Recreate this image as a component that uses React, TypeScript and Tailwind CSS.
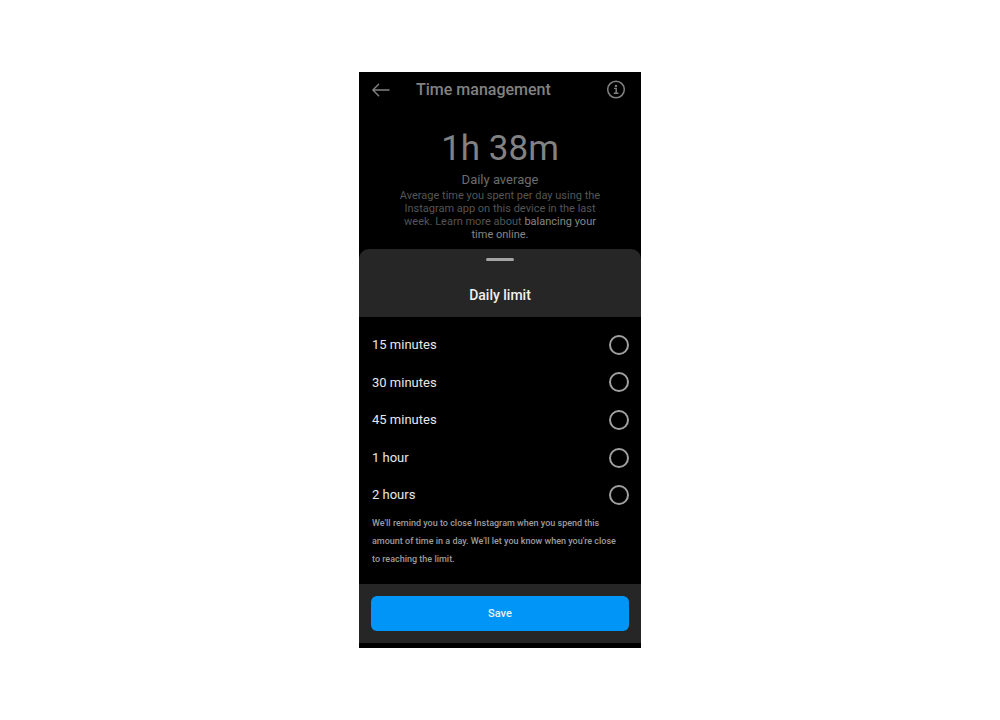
import React, { useState } from "react"

type LimitOption = {
    id: string
    label: string
}

const limitOptions: LimitOption[] = [
    { id: "15m", label: "15 minutes" },
    { id: "30m", label: "30 minutes" },
    { id: "45m", label: "45 minutes" },
    { id: "1h", label: "1 hour" },
    { id: "2h", label: "2 hours" },
]

const BackIcon = () => (
    <svg width="18" height="14" viewBox="0 0 18 14" fill="none" stroke="currentColor" strokeWidth="1.4" strokeLinecap="round" strokeLinejoin="round" aria-hidden="true">
        <path d="M17 7H1M6.6 1.2L0.9 7l5.7 5.8" />
    </svg>
)

const InfoIcon = () => (
    <svg width="20" height="20" viewBox="0 0 20 20" fill="none" stroke="currentColor" strokeWidth="1.5" aria-hidden="true">
        <circle cx="10" cy="9.5" r="8.3" />
        <path d="M8 8.4h2.2v4.8M7.8 13.2h4.6" strokeWidth="1.4" />
        <circle cx="10" cy="5.9" r="1.2" fill="currentColor" stroke="none" />
    </svg>
)

const Header = () => (
    <header className="flex h-9 items-center pr-3 pl-[13px] text-[#828282]">
        <button type="button" aria-label="Back" className="flex w-11 items-center">
            <BackIcon />
        </button>
        <h1 className="flex-1 text-base leading-5 font-medium">Time management</h1>
        <button type="button" aria-label="More information" className="mr-[3px]">
            <InfoIcon />
        </button>
    </header>
)

const Summary = () => (
    <section className="flex flex-col items-center px-10 pt-5 pb-2 text-center">
        <p className="text-[35px] leading-[42px] text-[#828282]">1h 38m</p>
        <h2 className="text-[13px] leading-[19px] text-[#6c6c6c]">Daily average</h2>
        <p className="text-[11px] leading-[13px] text-[#555555]">
            Average time you spent per day using the Instagram app on this device in the last week. Learn more about{" "}
            <a href="#balance" className="text-[#868686]">balancing your time online.</a>
        </p>
    </section>
)

const DailyLimitSheet = () => {
    const [selected, setSelected] = useState("")

    return (
        <form className="flex flex-col" onSubmit={(e) => e.preventDefault()}>
            <div className="flex flex-col items-center rounded-t-[10px] bg-[#262626] pt-[9px] pb-3">
                <span className="h-[3px] w-7 rounded-full bg-[#a5a5a5]" />
                <h2 id="limit-title" className="pt-6 text-sm leading-5 font-medium text-[#f0f0f0]">Daily limit</h2>
            </div>

            <div role="radiogroup" aria-labelledby="limit-title" className="mt-[9px] flex h-[188px] flex-col pr-3 pl-[13px]">
                {limitOptions.map((option) => (
                    <label key={option.id} className="flex flex-1 cursor-pointer items-center justify-between text-[13px] text-[#e8e8e8]">
                        {option.label}
                        <input
                            type="radio"
                            name="limit"
                            value={option.id}
                            checked={selected === option.id}
                            onChange={() => setSelected(option.id)}
                            className="size-5 appearance-none rounded-full border-2 border-[#a0a0a0] checked:border-[6px] checked:border-[#0095f6]"
                        />
                    </label>
                ))}
            </div>

            <p className="pr-4 pb-4 pl-[13px] text-[9px] leading-[18px] font-medium text-[#9c9c9c]">
                We'll remind you to close Instagram when you spend this amount of time in a day. We'll let you know when you're close to reaching the limit.
            </p>

            <div className="bg-[#262626] p-3">
                <button type="submit" className="h-[35px] w-full rounded-md bg-[#0095f6] pt-px text-[11px] font-medium text-[#f0f0f0]">
                    Save
                </button>
            </div>
        </form>
    )
}

const App = () => {
    return (
        <div className="flex min-h-screen items-center justify-center bg-white font-['Roboto',sans-serif]">
            <main className="w-full max-w-[282px] bg-black pb-[5px]">
                <Header />
                <Summary />
                <DailyLimitSheet />
            </main>
        </div>
    )
}

export default App
